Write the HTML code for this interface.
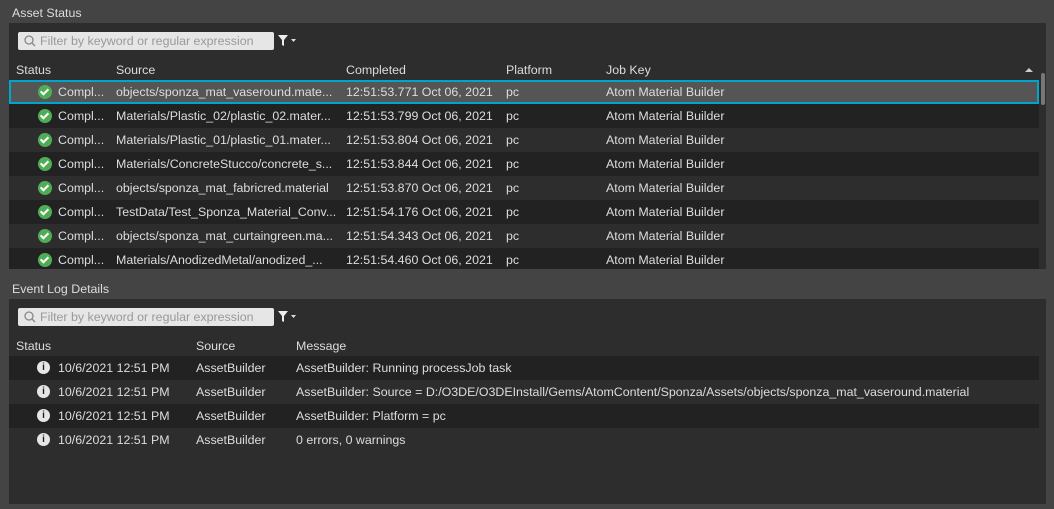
<!DOCTYPE html>
<html><head><style>
*{margin:0;padding:0;box-sizing:border-box}
body{width:1054px;height:509px;background:#444;font-family:"Liberation Sans",sans-serif;font-size:12.4px;color:#ddd;position:relative;overflow:hidden}
.lbl{position:absolute;left:12px;color:#ddd}
.panel{position:absolute;left:9px;right:8px;background:#2d2d2d}
.filter{position:absolute;left:9px;width:256px;height:18px;background:#e6e6e6;border-radius:2px;color:#999;font-size:12.4px;line-height:18px;padding-left:22px}
.filter svg{position:absolute;left:6px;top:3px}
.funnel{position:absolute;left:268px;top:2px}
.hdr{position:absolute;left:0;right:0;height:20px;line-height:20px}
.row{position:absolute;left:0;width:1030px;height:24px;line-height:24px;white-space:nowrap}
.c{position:absolute;top:0}
.dark{background:#222}
.sel{background:#555;border:2px solid #00a4cc}
.ok{position:absolute;top:5px;width:14px;height:14px;border-radius:50%;background:#4fae55}
.ok::after{content:"";position:absolute;left:4px;top:2px;width:3px;height:6px;border:solid #fff;border-width:0 2px 2px 0;transform:rotate(45deg)}
.info{position:absolute;top:5px;width:13px;height:13px;border-radius:50%;background:#e6e6e6;color:#222;font-size:10px;font-weight:bold;text-align:center;line-height:13px}
</style></head><body>
<div class="lbl" style="top:6px">Asset Status</div>
<div class="panel" style="top:23px;height:246px">
  <div class="filter" style="top:9px"><svg width="12" height="12"><circle cx="5" cy="5" r="4" fill="none" stroke="#888" stroke-width="1.3"/><line x1="8" y1="8" x2="11" y2="11" stroke="#888" stroke-width="1.3"/></svg>Filter by keyword or regular expression</div>
  <svg class="funnel" style="top:11px" width="24" height="14"><path d="M1 1h10l-4 5v6l-2-1v-5z" fill="#eee"/><path d="M14 5h5l-2.5 3z" fill="#ddd"/></svg>
  <div class="hdr" style="top:37px">
    <span class="c" style="left:7px">Status</span><span class="c" style="left:107px">Source</span><span class="c" style="left:337px">Completed</span><span class="c" style="left:497px">Platform</span><span class="c" style="left:597px">Job Key</span>
    <svg style="position:absolute;left:1016px;top:7px" width="8" height="6"><path d="M0 5h8l-4-4z" fill="#ccc"/></svg>
  </div>
  <div style="position:absolute;left:1032px;top:50px;width:4px;height:32px;background:#777;border-radius:2px"></div>
  <div class="row sel" style="top:57px"><span class="ok" style="left:27px;top:3px"></span><span class="c" style="left:47px;top:-2px">Compl...</span><span class="c" style="left:105px;top:-2px">objects/sponza_mat_vaseround.mate...</span><span class="c" style="left:335px;top:-2px">12:51:53.771 Oct 06, 2021</span><span class="c" style="left:495px;top:-2px">pc</span><span class="c" style="left:595px;top:-2px">Atom Material Builder</span></div>
  <div class="row dark" style="top:81px"><span class="ok" style="left:29px"></span><span class="c" style="left:49px">Compl...</span><span class="c" style="left:107px">Materials/Plastic_02/plastic_02.mater...</span><span class="c" style="left:337px">12:51:53.799 Oct 06, 2021</span><span class="c" style="left:497px">pc</span><span class="c" style="left:597px">Atom Material Builder</span></div>
  <div class="row" style="top:105px"><span class="ok" style="left:29px"></span><span class="c" style="left:49px">Compl...</span><span class="c" style="left:107px">Materials/Plastic_01/plastic_01.mater...</span><span class="c" style="left:337px">12:51:53.804 Oct 06, 2021</span><span class="c" style="left:497px">pc</span><span class="c" style="left:597px">Atom Material Builder</span></div>
  <div class="row dark" style="top:129px"><span class="ok" style="left:29px"></span><span class="c" style="left:49px">Compl...</span><span class="c" style="left:107px">Materials/ConcreteStucco/concrete_s...</span><span class="c" style="left:337px">12:51:53.844 Oct 06, 2021</span><span class="c" style="left:497px">pc</span><span class="c" style="left:597px">Atom Material Builder</span></div>
  <div class="row" style="top:153px"><span class="ok" style="left:29px"></span><span class="c" style="left:49px">Compl...</span><span class="c" style="left:107px">objects/sponza_mat_fabricred.material</span><span class="c" style="left:337px">12:51:53.870 Oct 06, 2021</span><span class="c" style="left:497px">pc</span><span class="c" style="left:597px">Atom Material Builder</span></div>
  <div class="row dark" style="top:177px"><span class="ok" style="left:29px"></span><span class="c" style="left:49px">Compl...</span><span class="c" style="left:107px">TestData/Test_Sponza_Material_Conv...</span><span class="c" style="left:337px">12:51:54.176 Oct 06, 2021</span><span class="c" style="left:497px">pc</span><span class="c" style="left:597px">Atom Material Builder</span></div>
  <div class="row" style="top:201px"><span class="ok" style="left:29px"></span><span class="c" style="left:49px">Compl...</span><span class="c" style="left:107px">objects/sponza_mat_curtaingreen.ma...</span><span class="c" style="left:337px">12:51:54.343 Oct 06, 2021</span><span class="c" style="left:497px">pc</span><span class="c" style="left:597px">Atom Material Builder</span></div>
  <div class="row dark" style="top:225px;height:21px"><span class="ok" style="left:29px"></span><span class="c" style="left:49px">Compl...</span><span class="c" style="left:107px">Materials/AnodizedMetal/anodized_...</span><span class="c" style="left:337px">12:51:54.460 Oct 06, 2021</span><span class="c" style="left:497px">pc</span><span class="c" style="left:597px">Atom Material Builder</span></div>
</div>
<div class="lbl" style="top:282px">Event Log Details</div>
<div class="panel" style="top:299px;height:205px">
  <div class="filter" style="top:9px"><svg width="12" height="12"><circle cx="5" cy="5" r="4" fill="none" stroke="#888" stroke-width="1.3"/><line x1="8" y1="8" x2="11" y2="11" stroke="#888" stroke-width="1.3"/></svg>Filter by keyword or regular expression</div>
  <svg class="funnel" style="top:11px" width="24" height="14"><path d="M1 1h10l-4 5v6l-2-1v-5z" fill="#eee"/><path d="M14 5h5l-2.5 3z" fill="#ddd"/></svg>
  <div class="hdr" style="top:37px"><span class="c" style="left:7px">Status</span><span class="c" style="left:187px">Source</span><span class="c" style="left:287px">Message</span></div>
  <div class="row dark" style="top:57px"><span class="info" style="left:28px">i</span><span class="c" style="left:49px">10/6/2021 12:51 PM</span><span class="c" style="left:187px">AssetBuilder</span><span class="c" style="left:287px">AssetBuilder: Running processJob task</span></div>
  <div class="row" style="top:81px"><span class="info" style="left:28px">i</span><span class="c" style="left:49px">10/6/2021 12:51 PM</span><span class="c" style="left:187px">AssetBuilder</span><span class="c" style="left:287px">AssetBuilder: Source = D:/O3DE/O3DEInstall/Gems/AtomContent/Sponza/Assets/objects/sponza_mat_vaseround.material</span></div>
  <div class="row dark" style="top:105px"><span class="info" style="left:28px">i</span><span class="c" style="left:49px">10/6/2021 12:51 PM</span><span class="c" style="left:187px">AssetBuilder</span><span class="c" style="left:287px">AssetBuilder: Platform = pc</span></div>
  <div class="row" style="top:129px"><span class="info" style="left:28px">i</span><span class="c" style="left:49px">10/6/2021 12:51 PM</span><span class="c" style="left:187px">AssetBuilder</span><span class="c" style="left:287px">0 errors, 0 warnings</span></div>
</div>
</body></html>
